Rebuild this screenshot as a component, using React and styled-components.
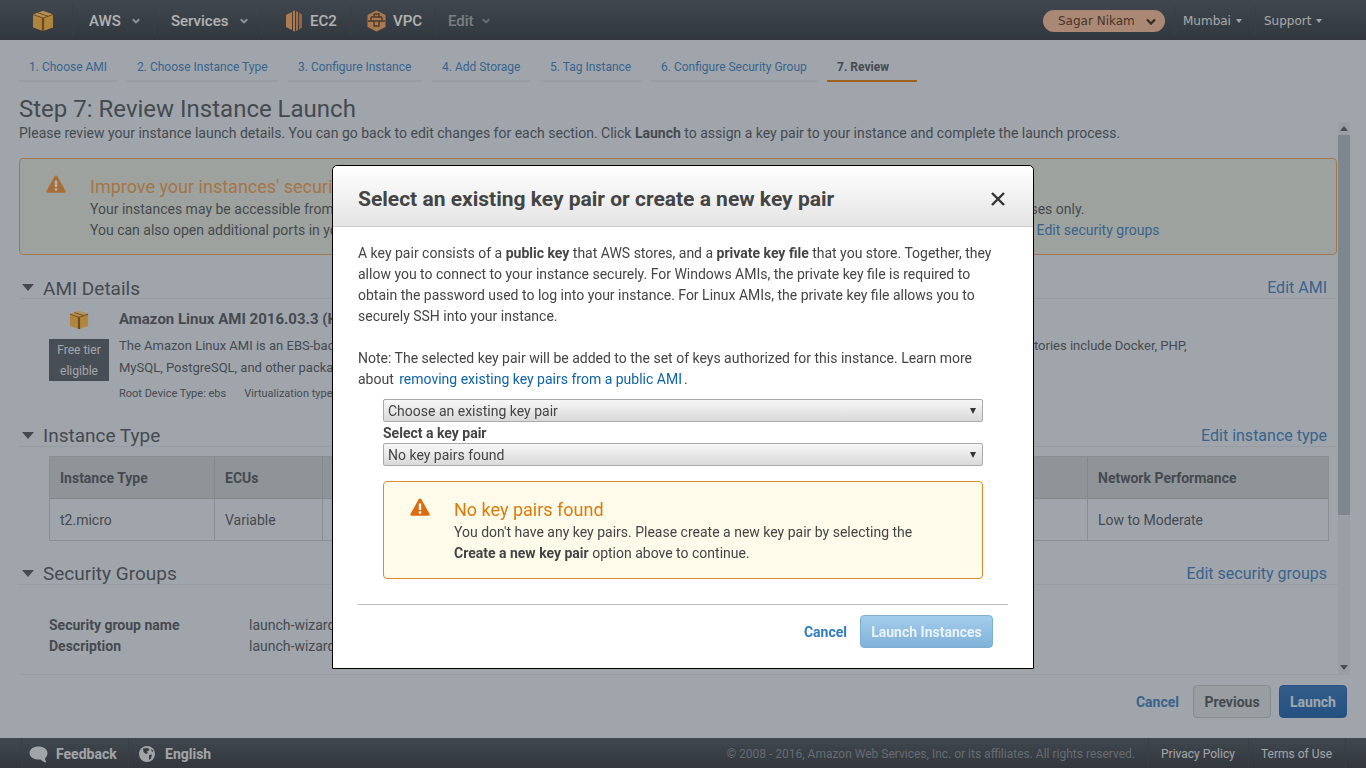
import React from 'react'
import styled, { createGlobalStyle } from 'styled-components'

const GlobalStyle = createGlobalStyle`
    html, body {
        margin: 0;
        padding: 0;
        height: 100%;
        overflow: hidden;
    }
    body {
        font-family: Roboto, "Liberation Sans", sans-serif;
        font-size: 14px;
        color: #444;
        background: #e5edf7;
    }
    * {
        box-sizing: border-box;
    }
`;

const Page = styled.div`
    width: 1366px;
    height: 768px;
    display: flex;
    flex-direction: column;
    background: #e5edf7;
    color: #646b72;
`;

const TopNav = styled.div`
    height: 40px;
    flex: none;
    display: flex;
    align-items: center;
    padding-top: 2px;
    background: linear-gradient(#5c6670, #485059);
    color: #fff;
`;
const NavCell = styled.div`
    width: ${p => p.$width}px;
    height: 30px;
    flex: none;
    display: flex;
    align-items: center;
    gap: ${p => p.$gap || 7}px;
    padding-left: ${p => p.$pad || 16}px;
    border-right: ${p => p.$last ? 'none' : '1px solid #525b64'};
    font-size: 15px;
    font-weight: 500;
    opacity: ${p => p.$dim ? 0.55 : 1};
    svg {
        flex: none;
    }
`;
const NavSpacer = styled.div`
    flex: 1;
`;
const UserPill = styled.div`
    width: 122px;
    height: 22px;
    margin-right: 9px;
    display: flex;
    align-items: center;
    justify-content: space-between;
    padding: 0 9px 0 15px;
    border-radius: 11px;
    background: #f3c5a9;
    color: #6b4c3b;
    font-family: "DejaVu Sans", sans-serif;
    font-size: 12px;
`;
const RegionMenu = styled.div`
    width: ${p => p.$width}px;
    height: 30px;
    display: flex;
    align-items: center;
    gap: 5px;
    padding-left: 8px;
    border-left: 1px solid #525b64;
    font-family: "DejaVu Sans", sans-serif;
    font-size: 12px;
    color: #eef1f4;
`;
const Caret = styled.span`
    width: 0;
    height: 0;
    border-left: 3.5px solid transparent;
    border-right: 3.5px solid transparent;
    border-top: 4px solid #eef1f4;
`;

const Tabs = styled.div`
    height: 41px;
    flex: none;
    display: flex;
    gap: 10px;
    padding: 16px 0 0 19px;
`;
const Tab = styled.div`
    width: ${p => p.$width}px;
    height: 26px;
    padding: 3px 0 0 10px;
    font-size: 12px;
    line-height: 16px;
    white-space: nowrap;
    font-weight: ${p => p.$active ? 700 : 400};
    color: ${p => p.$active ? '#646b72' : '#538fc8'};
    border-bottom: 2px solid ${p => p.$active ? '#e58a2e' : '#dbe2ea'};
`;

const Heading = styled.h1`
    margin: 0;
    height: 41px;
    flex: none;
    padding: 14px 0 0 19px;
    font-size: 24px;
    line-height: 28px;
    font-weight: 400;
    color: #646b72;
`;

const Scroller = styled.div`
    height: 553px;
    flex: none;
    display: flex;
    margin-left: 19px;
    margin-right: 16px;
    border-bottom: 1px solid #dbe3ec;
`;
const ScrollContent = styled.div`
    flex: 1;
    overflow: hidden;
`;
const Intro = styled.div`
    height: 22px;
    padding-top: 1px;
    line-height: 21px;
    white-space: nowrap;
`;
const WarningBanner = styled.div`
    height: 97px;
    margin-top: 14px;
    display: flex;
    padding: 16px 0 0 26px;
    border: 1px solid #e4ad78;
    border-radius: 4px;
    background: #e3e9e2;
`;
const WarningText = styled.div`
    margin-left: 24px;
    white-space: nowrap;
    line-height: 21px;
`;
const WarningTitle = styled.div`
    font-size: 18px;
    line-height: 24px;
    color: ${p => p.$light ? '#dd7a09' : '#eca868'};
`;
const TextLink = styled.a`
    margin-left: 1px;
    color: #538fc8;
`;

const SectionHead = styled.div`
    height: 22px;
    display: flex;
    align-items: center;
    margin-top: ${p => p.$top}px;
    padding: 0 10px 0 3px;
    border-bottom: 1px solid #d8e0e9;
    font-size: 19px;
    color: #646b72;
    span {
        margin-left: 9px;
        padding-top: ${p => p.$drop ? 2 : 0}px;
    }
    a {
        margin-left: auto;
        font-size: 16px;
        color: #538fc8;
    }
`;
const Triangle = styled.i`
    width: 0;
    height: 0;
    border-left: 6px solid transparent;
    border-right: 6px solid transparent;
    border-top: 7px solid #646b72;
`;

const AmiRow = styled.div`
    height: 126px;
    display: flex;
    padding: 11px 0 0 30px;
`;
const FreeTier = styled.div`
    width: 60px;
    flex: none;
    display: flex;
    flex-direction: column;
    align-items: center;
    gap: 9px;
`;
const FreeBadge = styled.div`
    width: 60px;
    height: 42px;
    padding-top: 1px;
    background: #66707a;
    color: #e9edf1;
    font-size: 12px;
    line-height: 21px;
    text-align: center;
`;
const AmiInfo = styled.div`
    margin-left: 10px;
    width: 1085px;
`;
const AmiTitle = styled.div`
    font-size: 15px;
    line-height: 18px;
    font-weight: 700;
    white-space: nowrap;
`;
const AmiDesc = styled.div`
    margin-top: 7px;
    font-size: 13px;
    line-height: 22px;
`;
const AmiMeta = styled.div`
    margin-top: 8px;
    display: flex;
    gap: 18px;
    font-size: 11px;
    line-height: 14px;
`;

const SpecTable = styled.div`
    width: 1280px;
    margin: 9px 0 0 30px;
    display: grid;
    grid-template-columns: 165px 108px 180px 160px 180px 245px 240px;
    border: 1px solid #c5ccd4;
    height: 85px;
    grid-template-rows: 42px 41px;
`;
const HeadCell = styled.div`
    display: flex;
    align-items: center;
    padding-left: 10px;
    background: #cdd4dc;
    border-right: 1px solid #bcc3cb;
    border-bottom: 1px solid #bcc3cb;
    font-weight: 700;
    white-space: nowrap;
    &:nth-child(7) {
        border-right: none;
    }
`;
const BodyCell = styled.div`
    display: flex;
    align-items: center;
    padding-left: 10px;
    border-right: 1px solid #c5ccd4;
    white-space: nowrap;
    &:last-child {
        border-right: none;
    }
`;

const GroupRows = styled.div`
    margin: 30px 0 0 30px;
`;
const GroupRow = styled.div`
    display: flex;
    line-height: 21px;
    white-space: nowrap;
    b {
        width: 200px;
    }
`;

const Track = styled.div`
    width: 12px;
    flex: none;
    position: relative;
    background: #dde4ec;
    margin-left: 1px;
`;
const Thumb = styled.div`
    position: absolute;
    top: 13px;
    left: 0;
    right: 0;
    height: 380px;
    background: #b5c0cc;
`;
const TrackArrow = styled.i`
    position: absolute;
    left: 2px;
    ${p => p.$down ? 'bottom: 4px;' : 'top: 4px;'}
    width: 0;
    height: 0;
    border-left: 4px solid transparent;
    border-right: 4px solid transparent;
    ${p => p.$down ? 'border-top: 5px solid #66707a;' : 'border-bottom: 5px solid #66707a;'}
`;

const Actions = styled.div`
    height: 63px;
    flex: none;
    display: flex;
    align-items: flex-start;
    justify-content: flex-end;
    gap: 8px;
    padding: 10px 19px 0 0;
`;
const PlainAction = styled.a`
    margin-right: 6px;
    line-height: 35px;
    font-weight: 700;
    color: #538fc8;
`;
const ActionButton = styled.div`
    width: ${p => p.$width}px;
    height: 33px;
    display: flex;
    align-items: center;
    justify-content: center;
    border-radius: 4px;
    font-weight: 700;
    border: 1px solid ${p => p.$primary ? '#3a78bb' : '#c4cad1'};
    background: ${p => p.$primary ? 'linear-gradient(#4a86c8, #3574b8)' : '#dce2e8'};
    color: ${p => p.$primary ? '#e6f0fa' : '#646b72'};
`;

const BottomBar = styled.div`
    height: 30px;
    flex: none;
    display: flex;
    align-items: center;
    padding-left: 21px;
    padding-right: 20px;
    background: linear-gradient(#5c6670, #495159);
    color: #e8ecf0;
`;
const BarCell = styled.div`
    width: ${p => p.$width}px;
    height: 30px;
    flex: none;
    display: flex;
    align-items: center;
    gap: ${p => p.$gap || 8}px;
    padding-top: 2px;
    padding-left: ${p => p.$pad || 8}px;
    border-left: 1px solid #525b64;
    font-weight: ${p => p.$bold ? 700 : 400};
    font-size: ${p => p.$bold ? 14 : 12}px;
    &:last-child {
        border-right: 1px solid #525b64;
    }
`;
const BarRight = styled.div`
    margin-left: auto;
    display: flex;
    align-items: center;
`;
const Copyright = styled.div`
    margin-right: 13px;
    padding-top: 2px;
    font-size: 12px;
    color: #939ba3;
`;

const Overlay = styled.div`
    position: fixed;
    inset: 0;
    display: flex;
    justify-content: center;
    align-items: flex-start;
    padding-top: 165px;
    background: rgba(0, 0, 0, 0.3);
`;
const Modal = styled.div`
    width: 702px;
    height: 504px;
    display: flex;
    flex-direction: column;
    background: #fff;
    border: 1px solid #000;
    border-radius: 5px 5px 0 0;
    color: #444;
`;
const ModalHeader = styled.div`
    height: 61px;
    flex: none;
    display: flex;
    align-items: center;
    justify-content: space-between;
    padding: 6px 28px 0 25px;
    border-radius: 5px 5px 0 0;
    border-bottom: 1px solid #ccc;
    background: linear-gradient(#fff, #e4e4e4);
    h2 {
        margin: 0;
        font-size: 21px;
        font-weight: 700;
    }
`;
const ModalBody = styled.div`
    flex: 1;
    padding: 16px 25px 0;
`;
const Para = styled.p`
    margin: 0 0 21px;
    width: 640px;
    line-height: 21px;
    a {
        margin: 0 2px;
        color: #0f62ab;
    }
`;
const KeyForm = styled.div`
    width: 600px;
    margin: -12px 0 0 25px;
`;
const SelectBox = styled.div`
    height: 23px;
    display: flex;
    align-items: center;
    justify-content: space-between;
    padding: 0 6px 0 4px;
    border: 1px solid #aaa;
    border-radius: 2px;
    background: linear-gradient(#f7f7f7, #d9d9d9);
    font-size: 14px;
    i {
        width: 0;
        height: 0;
        border-left: 3px solid transparent;
        border-right: 3px solid transparent;
        border-top: 6px solid #333;
    }
`;
const FieldLabel = styled.div`
    height: 21px;
    line-height: 23px;
    font-weight: 700;
`;
const AlertBox = styled.div`
    height: 98px;
    margin-top: 15px;
    display: flex;
    padding: 16px 0 0 26px;
    border: 1px solid #de8a2f;
    border-radius: 4px;
    background: #fffbea;
`;
const AlertText = styled.div`
    margin-left: 24px;
    line-height: 21px;
`;
const ModalFooter = styled.div`
    margin: 0 25px;
    height: 64px;
    flex: none;
    display: flex;
    align-items: flex-start;
    justify-content: flex-end;
    gap: 13px;
    padding: 10px 15px 0 0;
    border-top: 1px solid #bbb;
`;
const ModalCancel = styled.a`
    line-height: 34px;
    font-weight: 700;
    color: #2f7bc4;
`;
const DisabledButton = styled.div`
    width: 133px;
    height: 33px;
    display: flex;
    align-items: center;
    justify-content: center;
    border: 1px solid #7faed3;
    border-radius: 4px;
    background: linear-gradient(#a3cdec, #80b2d8);
    color: #e9f2f9;
    font-weight: 700;
`;

const Cube = ({size = 22}) => (
  <svg width={size} height={size} viewBox="0 0 22 22">
    <path d="M11 1 L21 4.5 V17.5 L11 21 L1 17.5 V4.5 Z" fill="#fdc15a" />
    <path d="M1 4.5 L11 8 L21 4.5 L11 1 Z" fill="#ffd27e" />
    <path d="M11 8 V21" stroke="#9c6d2a" strokeWidth="2.4" />
    <path d="M1 4.5 L11 8 L21 4.5" stroke="#9c6d2a" strokeWidth="1" fill="none" />
    <path d="M6 2.8 L16 6.2" stroke="#9c6d2a" strokeWidth="1" />
  </svg>
);

const Ec2Icon = () => (
  <svg width="18" height="22" viewBox="0 0 18 22">
    <path d="M1 5 L7 2 V20 L1 17 Z" fill="#fdb072" />
    <path d="M8 1 L10 0.5 V21.5 L8 21 Z" fill="#fdb072" />
    <path d="M11 1 L13 2 V20 L11 21 Z" fill="#ee9e60" />
    <path d="M14 2.5 L17 4.5 V17.5 L14 19.5 Z" fill="#e08e50" />
  </svg>
);

const VpcIcon = () => (
  <svg width="19" height="22" viewBox="0 0 19 22">
    <path d="M9.5 0.5 L18.5 5 V17 L9.5 21.5 L0.5 17 V5 Z" fill="#f5ac72" />
    <path d="M1 11 H18 M4 7 V11 M15 7 V11 M4 7 H15 M7 4 H12 V7 M7 4 V7 M7 11 V16 H12 V11" stroke="#6c5440" strokeWidth="1.4" fill="none" />
  </svg>
);

const Chevron = ({color = '#cfd5db', size = 8}) => (
  <svg width={size} height={size * 0.7} viewBox="0 0 10 7">
    <path d="M1 1.5 L5 5.5 L9 1.5" stroke={color} strokeWidth="2.4" fill="none" />
  </svg>
);

const WarnIcon = ({color}) => (
  <svg width="20" height="18" viewBox="0 0 20 18">
    <path d="M10 0.5 C10.6 0.5 11 0.8 11.3 1.3 L19.5 15.8 C20 16.8 19.5 17.8 18.3 17.8 H1.7 C0.5 17.8 0 16.8 0.5 15.8 L8.7 1.3 C9 0.8 9.4 0.5 10 0.5 Z" fill={color} />
    <rect x="8.8" y="5.5" width="2.4" height="6.5" fill="#fff" />
    <rect x="8.8" y="13.2" width="2.4" height="2.4" fill="#fff" />
  </svg>
);

const CloseIcon = () => (
  <svg width="14" height="14" viewBox="0 0 14 14">
    <path d="M1 1 L13 13 M13 1 L1 13" stroke="#333" strokeWidth="2.4" />
  </svg>
);

const ChatIcon = () => (
  <svg width="19" height="17" viewBox="0 0 19 17">
    <path d="M9.5 0.5 C14.5 0.5 18.5 3.2 18.5 7 C18.5 10 16.8 11.6 16 12.2 C16 13.8 17 15.5 17.5 16.5 C15 16 13 15 11.6 13.4 C11 13.5 10.2 13.5 9.5 13.5 C4.5 13.5 0.5 10.8 0.5 7 C0.5 3.2 4.5 0.5 9.5 0.5 Z" fill="#e8ecf0" />
  </svg>
);

const GlobeIcon = () => (
  <svg width="16" height="16" viewBox="0 0 16 16">
    <circle cx="8" cy="8" r="8" fill="#e8ecf0" />
    <path d="M4 2.5 L9 2 L10.5 4 L8 5.5 L9 7 L7 8 L4.5 6 Z M10 9 L13 8.5 L12 12.5 L10 14 Z M12 3 L14.5 5 L13 6 Z" fill="#4f5860" />
  </svg>
);

const steps = [
  ['1. Choose AMI', 98],
  ['2. Choose Instance Type', 151],
  ['3. Configure Instance', 134],
  ['4. Add Storage', 98],
  ['5. Tag Instance', 101],
  ['6. Configure Security Group', 166],
];

const specHeads = ['Instance Type', 'ECUs', 'vCPUs', 'Memory (GiB)', 'Instance Storage (GB)', 'EBS-Optimized Available', 'Network Performance'];
const specValues = ['t2.micro', 'Variable', '1', '1', 'EBS only', '-', 'Low to Moderate'];

const App = () => {
  return (
    <>
      <GlobalStyle />
      <Page>
        <TopNav>
          <NavCell $width={73} $pad={32}><Cube /></NavCell>
          <NavCell $width={82} $gap={11}>AWS <Chevron /></NavCell>
          <NavCell $width={107} $gap={12}>Services <Chevron /></NavCell>
          <NavCell $width={89} $pad={23}><Ec2Icon />EC2</NavCell>
          <NavCell $width={85} $pad={16}><VpcIcon />VPC</NavCell>
          <NavCell $width={70} $pad={12} $dim $gap={8} $last>Edit <Chevron /></NavCell>
          <NavSpacer />
          <UserPill>Sagar Nikam <Chevron color="#5b3f30" size={10} /></UserPill>
          <RegionMenu $width={81}>Mumbai <Caret /></RegionMenu>
          <RegionMenu $width={111}>Support <Caret /></RegionMenu>
        </TopNav>

        <Tabs>
          {steps.map(([s, w]) => <Tab key={s} $width={w}>{s}</Tab>)}
          <Tab $active $width={90}>7. Review</Tab>
        </Tabs>

        <Heading>Step 7: Review Instance Launch</Heading>

        <Scroller>
          <ScrollContent>
            <Intro>Please review your instance launch details. You can go back to edit changes for each section. Click <b>Launch</b> to assign a key pair to your instance and complete the launch process.</Intro>
            <WarningBanner>
              <WarnIcon color="#f0a050" />
              <WarningText>
                <WarningTitle>Improve your instances' security. Your security group, launch-wizard-1, is open to the world.</WarningTitle>
                <div>Your instances may be accessible from any IP address. We recommend that you update your security group rules to allow access from known IP addresses only.</div>
                <div>You can also open additional ports in your security group to facilitate access to the application or service you're running, e.g., HTTP (80) for web servers. <TextLink>Edit security groups</TextLink></div>
              </WarningText>
            </WarningBanner>

            <SectionHead $top={22} $drop><Triangle /><span>AMI Details</span><a>Edit AMI</a></SectionHead>
            <AmiRow>
              <FreeTier>
                <Cube size={20} />
                <FreeBadge>Free tier eligible</FreeBadge>
              </FreeTier>
              <AmiInfo>
                <AmiTitle>Amazon Linux AMI 2016.03.3 (HVM), SSD Volume Type - ami-cdbdd7a2</AmiTitle>
                <AmiDesc>The Amazon Linux AMI is an EBS-backed, AWS-supported image. The default image includes AWS command line tools, Python, Ruby, Perl, and Java. The repositories include Docker, PHP, MySQL, PostgreSQL, and other packages.</AmiDesc>
                <AmiMeta><span>Root Device Type: ebs</span><span>Virtualization type: hvm</span></AmiMeta>
              </AmiInfo>
            </AmiRow>

            <SectionHead $top={0}><Triangle /><span>Instance Type</span><a>Edit instance type</a></SectionHead>
            <SpecTable>
              {specHeads.map(h => <HeadCell key={h}>{h}</HeadCell>)}
              {specValues.map((v, i) => <BodyCell key={i}>{v}</BodyCell>)}
            </SpecTable>

            <SectionHead $top={22}><Triangle /><span>Security Groups</span><a>Edit security groups</a></SectionHead>
            <GroupRows>
              <GroupRow><b>Security group name</b><span>launch-wizard-1</span></GroupRow>
              <GroupRow><b>Description</b><span>launch-wizard-1 created 2016-08-12T10:21:44.321+05:30</span></GroupRow>
            </GroupRows>
          </ScrollContent>
          <Track>
            <TrackArrow />
            <Thumb />
            <TrackArrow $down />
          </Track>
        </Scroller>

        <Actions>
          <PlainAction>Cancel</PlainAction>
          <ActionButton $width={78}>Previous</ActionButton>
          <ActionButton $width={68} $primary>Launch</ActionButton>
        </Actions>

        <BottomBar>
          <BarCell $width={107} $pad={7} $bold><ChatIcon />Feedback</BarCell>
          <BarCell $width={94} $bold $pad={10} $gap={10}><GlobeIcon />English</BarCell>
          <BarRight>
            <Copyright>© 2008 - 2016, Amazon Web Services, Inc. or its affiliates. All rights reserved.</Copyright>
            <BarCell $width={100} $pad={12}>Privacy Policy</BarCell>
            <BarCell $width={98} $pad={12}>Terms of Use</BarCell>
          </BarRight>
        </BottomBar>
      </Page>

      <Overlay>
        <Modal>
          <ModalHeader>
            <h2>Select an existing key pair or create a new key pair</h2>
            <CloseIcon />
          </ModalHeader>
          <ModalBody>
            <Para>A key pair consists of a <b>public key</b> that AWS stores, and a <b>private key file</b> that you store. Together, they allow you to connect to your instance securely. For Windows AMIs, the private key file is required to obtain the password used to log into your instance. For Linux AMIs, the private key file allows you to securely SSH into your instance.</Para>
            <Para>Note: The selected key pair will be added to the set of keys authorized for this instance. Learn more about <a>removing existing key pairs from a public AMI</a>.</Para>
            <KeyForm>
              <SelectBox>Choose an existing key pair<i /></SelectBox>
              <FieldLabel>Select a key pair</FieldLabel>
              <SelectBox>No key pairs found<i /></SelectBox>
              <AlertBox>
                <WarnIcon color="#dd6b10" />
                <AlertText>
                  <WarningTitle $light>No key pairs found</WarningTitle>
                  <div>You don't have any key pairs. Please create a new key pair by selecting the</div>
                  <div><b>Create a new key pair</b> option above to continue.</div>
                </AlertText>
              </AlertBox>
            </KeyForm>
          </ModalBody>
          <ModalFooter>
            <ModalCancel>Cancel</ModalCancel>
            <DisabledButton>Launch Instances</DisabledButton>
          </ModalFooter>
        </Modal>
      </Overlay>
    </>
  );
}

export default App
